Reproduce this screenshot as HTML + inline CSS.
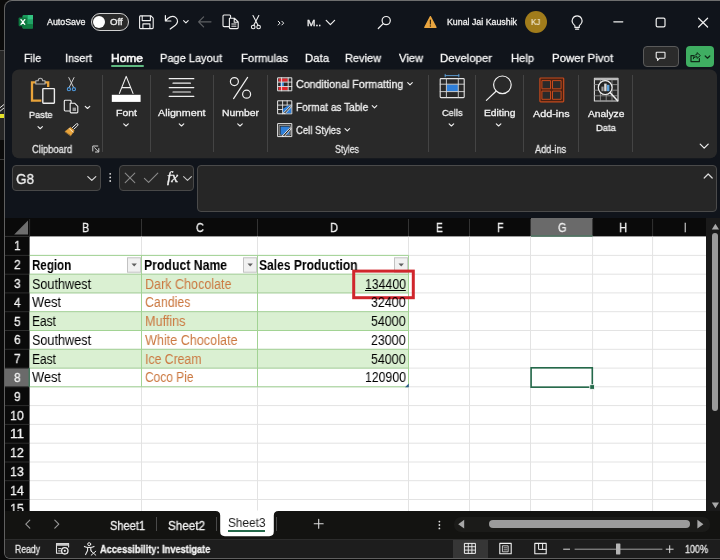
<!DOCTYPE html>
<html lang="en"><head><meta charset="utf-8"><title>Excel - Sheet3</title>
<style>
html,body{margin:0;padding:0}
body{width:720px;height:560px;overflow:hidden;background:#0a0a0a;font-family:"Liberation Sans",sans-serif}
#root{position:relative;width:720px;height:560px;overflow:hidden;background:#0a0a0a}
.t{position:absolute;white-space:pre;transform-origin:0 50%;will-change:transform}
.a{position:absolute;box-sizing:border-box}
svg{position:absolute;overflow:visible}
</style></head>
<body>
<div id="root">
<div class="a" style="left:0;top:0;width:5px;height:560px;background:#0b0b0b"></div>
<div class="a" style="left:0;top:50px;width:4px;height:90px;background:#252525;border-top:1px solid #4a4a4a"></div>
<div class="a" style="left:0;top:114px;width:4px;height:4px;background:#e6e22a"></div>
<div class="a" style="left:0;top:159px;width:4px;height:1px;background:#3a3a3a"></div>
<svg class="a" style="left:0;top:0" width="5" height="560" viewBox="0 0 5 560"><path d="M-1 108.5 L4 104.5 M-1 112 L4 108" stroke="#e8e8e8" stroke-width="1" fill="none"/></svg>
<div class="a" style="left:4px;top:0;width:730px;height:559px;border:1px solid #606060;border-top-color:#6e6e6e;border-radius:8px 0 0 6px;background:#10141b"></div>
<svg class="a" style="left:0;top:0" width="720" height="170" viewBox="0 0 720 170"><rect x="12" y="69.4" width="705" height="88.8" rx="7" fill="#292929"/></svg>
<div class="a" style="left:111px;top:65px;width:33px;height:2px;background:#5fb981;border-radius:1px"></div>
<div class="a" style="left:102px;top:75px;width:1px;height:77px;background:#444"></div>
<div class="a" style="left:150px;top:75px;width:1px;height:77px;background:#444"></div>
<div class="a" style="left:213px;top:75px;width:1px;height:77px;background:#444"></div>
<div class="a" style="left:267px;top:75px;width:1px;height:77px;background:#444"></div>
<div class="a" style="left:428px;top:75px;width:1px;height:77px;background:#444"></div>
<div class="a" style="left:475px;top:75px;width:1px;height:77px;background:#444"></div>
<div class="a" style="left:523px;top:75px;width:1px;height:77px;background:#444"></div>
<div class="a" style="left:578px;top:75px;width:1px;height:77px;background:#444"></div>
<div class="a" style="left:632px;top:75px;width:1px;height:77px;background:#444"></div>
<span class="t" style="left:46.60px;top:17.12px;font-size:8.8px;line-height:10.56px;color:#f0f0f0;transform:scaleX(1.0064);-webkit-text-stroke:0.3px #f0f0f0;">AutoSave</span>
<div class="a" style="left:90.6px;top:13.4px;width:38px;height:17.6px;border:1px solid #d0d0d0;border-radius:9px;background:#2a2a2a"></div>
<div class="a" style="left:93.4px;top:16.2px;width:12px;height:12px;border-radius:6px;background:#fff"></div>
<span class="t" style="left:110.20px;top:17.12px;font-size:8.8px;line-height:10.56px;color:#f0f0f0;transform:scaleX(1.0969);-webkit-text-stroke:0.3px #f0f0f0;">Off</span>
<span class="t" style="left:307.30px;top:16.64px;font-size:9.6px;line-height:11.52px;color:#f0f0f0;transform:scaleX(1.0504);-webkit-text-stroke:0.3px #f0f0f0;">M..</span>
<span class="t" style="left:447.00px;top:17.12px;font-size:8.8px;line-height:10.56px;color:#f0f0f0;transform:scaleX(1.0009);-webkit-text-stroke:0.3px #f0f0f0;">Kunal Jai Kaushik</span>
<div class="a" style="left:525px;top:11px;width:22px;height:22px;border-radius:11px;background:#a17c1b"></div>
<span class="t" style="left:531.40px;top:17.02px;font-size:8.8px;line-height:10.56px;color:#f3ebd6;transform:scaleX(0.9143);-webkit-text-stroke:0.3px #f3ebd6;-webkit-text-stroke:0.1px #f3ebd6;">KJ</span>
<span class="t" style="left:24.00px;top:51.60px;font-size:11.5px;line-height:13.8px;color:#f6f6f6;transform:scaleX(0.9174);-webkit-text-stroke:0.3px #f6f6f6;">File</span>
<span class="t" style="left:65.00px;top:51.60px;font-size:11.5px;line-height:13.8px;color:#f6f6f6;transform:scaleX(0.9386);-webkit-text-stroke:0.3px #f6f6f6;">Insert</span>
<span class="t" style="left:111.00px;top:51.60px;font-size:11.5px;line-height:13.8px;color:#f6f6f6;transform:scaleX(1.0428);-webkit-text-stroke:0.3px #f6f6f6;-webkit-text-stroke:0.6px #f6f6f6;">Home</span>
<span class="t" style="left:160.00px;top:51.60px;font-size:11.5px;line-height:13.8px;color:#f6f6f6;transform:scaleX(0.9598);-webkit-text-stroke:0.3px #f6f6f6;">Page Layout</span>
<span class="t" style="left:241.00px;top:51.60px;font-size:11.5px;line-height:13.8px;color:#f6f6f6;transform:scaleX(0.9804);-webkit-text-stroke:0.3px #f6f6f6;">Formulas</span>
<span class="t" style="left:305.00px;top:51.60px;font-size:11.5px;line-height:13.8px;color:#f6f6f6;transform:scaleX(0.9878);-webkit-text-stroke:0.3px #f6f6f6;">Data</span>
<span class="t" style="left:345.00px;top:51.60px;font-size:11.5px;line-height:13.8px;color:#f6f6f6;transform:scaleX(0.9544);-webkit-text-stroke:0.3px #f6f6f6;">Review</span>
<span class="t" style="left:399.00px;top:51.60px;font-size:11.5px;line-height:13.8px;color:#f6f6f6;transform:scaleX(0.9709);-webkit-text-stroke:0.3px #f6f6f6;">View</span>
<span class="t" style="left:440.00px;top:51.60px;font-size:11.5px;line-height:13.8px;color:#f6f6f6;transform:scaleX(0.9920);-webkit-text-stroke:0.3px #f6f6f6;">Developer</span>
<span class="t" style="left:511.00px;top:51.60px;font-size:11.5px;line-height:13.8px;color:#f6f6f6;transform:scaleX(0.9723);-webkit-text-stroke:0.3px #f6f6f6;">Help</span>
<span class="t" style="left:552.00px;top:51.60px;font-size:11.5px;line-height:13.8px;color:#f6f6f6;transform:scaleX(0.9941);-webkit-text-stroke:0.3px #f6f6f6;">Power Pivot</span>
<div class="a" style="left:643px;top:46px;width:36px;height:21px;border:1px solid #5a5a5a;border-radius:4px;background:#2b2b2b"></div>
<div class="a" style="left:686px;top:46px;width:28px;height:21px;border-radius:4px;background:#3fae62"></div>
<span class="t" style="left:28.70px;top:109.32px;font-size:9.8px;line-height:11.76px;color:#f2f2f2;transform:scaleX(0.9377);-webkit-text-stroke:0.3px #f2f2f2;">Paste</span>
<span class="t" style="left:31.60px;top:142.50px;font-size:10.5px;line-height:12.6px;color:#e6e6e6;transform:scaleX(0.8943);-webkit-text-stroke:0.3px #e6e6e6;">Clipboard</span>
<span class="t" style="left:116.20px;top:106.52px;font-size:9.8px;line-height:11.76px;color:#f2f2f2;transform:scaleX(1.0658);-webkit-text-stroke:0.3px #f2f2f2;">Font</span>
<span class="t" style="left:157.90px;top:106.52px;font-size:9.8px;line-height:11.76px;color:#f2f2f2;transform:scaleX(1.0923);-webkit-text-stroke:0.3px #f2f2f2;">Alignment</span>
<span class="t" style="left:221.60px;top:106.52px;font-size:9.8px;line-height:11.76px;color:#f2f2f2;transform:scaleX(1.0643);-webkit-text-stroke:0.3px #f2f2f2;">Number</span>
<span class="t" style="left:296.00px;top:78.30px;font-size:11px;line-height:13.2px;color:#f2f2f2;transform:scaleX(0.9695);-webkit-text-stroke:0.3px #f2f2f2;">Conditional Formatting</span>
<span class="t" style="left:296.00px;top:101.30px;font-size:11px;line-height:13.2px;color:#f2f2f2;transform:scaleX(0.9190);-webkit-text-stroke:0.3px #f2f2f2;">Format as Table</span>
<span class="t" style="left:296.00px;top:124.20px;font-size:11px;line-height:13.2px;color:#f2f2f2;transform:scaleX(0.8621);-webkit-text-stroke:0.3px #f2f2f2;">Cell Styles</span>
<span class="t" style="left:335.00px;top:142.70px;font-size:10.5px;line-height:12.6px;color:#e6e6e6;transform:scaleX(0.8393);-webkit-text-stroke:0.3px #e6e6e6;">Styles</span>
<span class="t" style="left:441.80px;top:106.52px;font-size:9.8px;line-height:11.76px;color:#f2f2f2;transform:scaleX(0.9412);-webkit-text-stroke:0.3px #f2f2f2;">Cells</span>
<span class="t" style="left:483.70px;top:106.52px;font-size:9.8px;line-height:11.76px;color:#f2f2f2;transform:scaleX(1.0478);-webkit-text-stroke:0.3px #f2f2f2;">Editing</span>
<span class="t" style="left:532.50px;top:107.62px;font-size:9.8px;line-height:11.76px;color:#f2f2f2;transform:scaleX(1.1048);-webkit-text-stroke:0.3px #f2f2f2;">Add-ins</span>
<span class="t" style="left:535.00px;top:142.90px;font-size:10.5px;line-height:12.6px;color:#e6e6e6;transform:scaleX(0.8762);-webkit-text-stroke:0.3px #e6e6e6;">Add-ins</span>
<span class="t" style="left:587.80px;top:107.52px;font-size:9.8px;line-height:11.76px;color:#f2f2f2;transform:scaleX(1.0442);-webkit-text-stroke:0.3px #f2f2f2;">Analyze</span>
<span class="t" style="left:596.10px;top:122.32px;font-size:9.8px;line-height:11.76px;color:#f2f2f2;transform:scaleX(0.9612);-webkit-text-stroke:0.3px #f2f2f2;">Data</span>
<div class="a" style="left:12px;top:165px;width:89px;height:26px;border:1px solid #484848;border-radius:4px;background:#262626"></div>
<span class="t" style="left:16.40px;top:169.60px;font-size:15px;line-height:18.0px;color:#f0f0f0;transform:scaleX(0.8993);-webkit-text-stroke:0.3px #f0f0f0;">G8</span>
<div class="a" style="left:119px;top:165px;width:75px;height:26px;border:1px solid #484848;border-radius:4px;background:#262626"></div>
<div class="a" style="left:197px;top:165px;width:520px;height:47px;border:1px solid #4a4a4a;border-radius:4px;background:#262626"></div>
<span class="t" style="left:166.90px;top:169.60px;font-size:14px;line-height:16.8px;color:#f0f0f0;transform:scaleX(1.1178);font-style:italic;font-family:'Liberation Serif', serif;-webkit-text-stroke:0.3px #f0f0f0;">fx</span>
<div class="a" style="left:5px;top:218px;width:715px;height:293px;background:#0a0a0a"></div>
<div class="a" style="left:706px;top:218px;width:14px;height:293px;background:#1a1a1a"></div>
<svg class="a" style="left:0;top:0" width="720" height="560" viewBox="0 0 720 560">
<rect x="29.6" y="236.4" width="676.4" height="275" fill="#fff"/>
<rect x="531" y="218" width="61.8" height="18.5" fill="#6a6a6a"/>
<rect x="5" y="368.1" width="24.6" height="18.78" fill="#6a6a6a"/>
<rect x="29.6" y="274.2" width="378.9" height="18.78" fill="#daf0d2"/>
<rect x="29.6" y="311.7" width="378.9" height="18.78" fill="#daf0d2"/>
<rect x="29.6" y="349.3" width="378.9" height="18.78" fill="#daf0d2"/>
<line x1="141.5" y1="236.6" x2="141.5" y2="511" stroke="#e3e3e3" stroke-width="1"/>
<line x1="141.5" y1="219" x2="141.5" y2="236" stroke="#333" stroke-width="1"/>
<line x1="257.5" y1="236.6" x2="257.5" y2="511" stroke="#e3e3e3" stroke-width="1"/>
<line x1="257.5" y1="219" x2="257.5" y2="236" stroke="#333" stroke-width="1"/>
<line x1="408.5" y1="236.6" x2="408.5" y2="511" stroke="#e3e3e3" stroke-width="1"/>
<line x1="408.5" y1="219" x2="408.5" y2="236" stroke="#333" stroke-width="1"/>
<line x1="469.5" y1="236.6" x2="469.5" y2="511" stroke="#e3e3e3" stroke-width="1"/>
<line x1="469.5" y1="219" x2="469.5" y2="236" stroke="#333" stroke-width="1"/>
<line x1="530.5" y1="236.6" x2="530.5" y2="511" stroke="#e3e3e3" stroke-width="1"/>
<line x1="530.5" y1="219" x2="530.5" y2="236" stroke="#333" stroke-width="1"/>
<line x1="592.6" y1="236.6" x2="592.6" y2="511" stroke="#e3e3e3" stroke-width="1"/>
<line x1="592.6" y1="219" x2="592.6" y2="236" stroke="#333" stroke-width="1"/>
<line x1="652.6" y1="236.6" x2="652.6" y2="511" stroke="#e3e3e3" stroke-width="1"/>
<line x1="652.6" y1="219" x2="652.6" y2="236" stroke="#333" stroke-width="1"/>
<line x1="29.6" y1="255.4" x2="706" y2="255.4" stroke="#e3e3e3" stroke-width="1"/>
<line x1="5" y1="255.4" x2="29.6" y2="255.4" stroke="#2e2e2e" stroke-width="1"/>
<line x1="29.6" y1="274.2" x2="706" y2="274.2" stroke="#e3e3e3" stroke-width="1"/>
<line x1="5" y1="274.2" x2="29.6" y2="274.2" stroke="#2e2e2e" stroke-width="1"/>
<line x1="29.6" y1="292.9" x2="706" y2="292.9" stroke="#e3e3e3" stroke-width="1"/>
<line x1="5" y1="292.9" x2="29.6" y2="292.9" stroke="#2e2e2e" stroke-width="1"/>
<line x1="29.6" y1="311.7" x2="706" y2="311.7" stroke="#e3e3e3" stroke-width="1"/>
<line x1="5" y1="311.7" x2="29.6" y2="311.7" stroke="#2e2e2e" stroke-width="1"/>
<line x1="29.6" y1="330.5" x2="706" y2="330.5" stroke="#e3e3e3" stroke-width="1"/>
<line x1="5" y1="330.5" x2="29.6" y2="330.5" stroke="#2e2e2e" stroke-width="1"/>
<line x1="29.6" y1="349.3" x2="706" y2="349.3" stroke="#e3e3e3" stroke-width="1"/>
<line x1="5" y1="349.3" x2="29.6" y2="349.3" stroke="#2e2e2e" stroke-width="1"/>
<line x1="29.6" y1="368.1" x2="706" y2="368.1" stroke="#e3e3e3" stroke-width="1"/>
<line x1="5" y1="368.1" x2="29.6" y2="368.1" stroke="#2e2e2e" stroke-width="1"/>
<line x1="29.6" y1="386.8" x2="706" y2="386.8" stroke="#e3e3e3" stroke-width="1"/>
<line x1="5" y1="386.8" x2="29.6" y2="386.8" stroke="#2e2e2e" stroke-width="1"/>
<line x1="29.6" y1="405.6" x2="706" y2="405.6" stroke="#e3e3e3" stroke-width="1"/>
<line x1="5" y1="405.6" x2="29.6" y2="405.6" stroke="#2e2e2e" stroke-width="1"/>
<line x1="29.6" y1="424.4" x2="706" y2="424.4" stroke="#e3e3e3" stroke-width="1"/>
<line x1="5" y1="424.4" x2="29.6" y2="424.4" stroke="#2e2e2e" stroke-width="1"/>
<line x1="29.6" y1="443.2" x2="706" y2="443.2" stroke="#e3e3e3" stroke-width="1"/>
<line x1="5" y1="443.2" x2="29.6" y2="443.2" stroke="#2e2e2e" stroke-width="1"/>
<line x1="29.6" y1="462.0" x2="706" y2="462.0" stroke="#e3e3e3" stroke-width="1"/>
<line x1="5" y1="462.0" x2="29.6" y2="462.0" stroke="#2e2e2e" stroke-width="1"/>
<line x1="29.6" y1="480.7" x2="706" y2="480.7" stroke="#e3e3e3" stroke-width="1"/>
<line x1="5" y1="480.7" x2="29.6" y2="480.7" stroke="#2e2e2e" stroke-width="1"/>
<line x1="29.6" y1="499.5" x2="706" y2="499.5" stroke="#e3e3e3" stroke-width="1"/>
<line x1="5" y1="499.5" x2="29.6" y2="499.5" stroke="#2e2e2e" stroke-width="1"/>
<line x1="29.6" y1="255.4" x2="408.5" y2="255.4" stroke="#a2d394" stroke-width="1"/>
<line x1="29.6" y1="274.2" x2="408.5" y2="274.2" stroke="#a2d394" stroke-width="1"/>
<line x1="29.6" y1="292.9" x2="408.5" y2="292.9" stroke="#a2d394" stroke-width="1"/>
<line x1="29.6" y1="311.7" x2="408.5" y2="311.7" stroke="#a2d394" stroke-width="1"/>
<line x1="29.6" y1="330.5" x2="408.5" y2="330.5" stroke="#a2d394" stroke-width="1"/>
<line x1="29.6" y1="349.3" x2="408.5" y2="349.3" stroke="#a2d394" stroke-width="1"/>
<line x1="29.6" y1="368.1" x2="408.5" y2="368.1" stroke="#a2d394" stroke-width="1"/>
<line x1="29.6" y1="386.8" x2="408.5" y2="386.8" stroke="#a2d394" stroke-width="1"/>
<line x1="141.5" y1="255.4" x2="141.5" y2="386.8" stroke="#a2d394" stroke-width="1"/>
<line x1="257.5" y1="255.4" x2="257.5" y2="386.8" stroke="#a2d394" stroke-width="1"/>
<line x1="408.5" y1="255.4" x2="408.5" y2="386.8" stroke="#a2d394" stroke-width="1"/>
<path d="M28 220.6 V234.6 H14.2 Z" fill="#6e6e6e"/>
<line x1="29.6" y1="219" x2="29.6" y2="236" stroke="#2c2c2c" stroke-width="1"/>
<line x1="5" y1="236.4" x2="29.6" y2="236.4" stroke="#333" stroke-width="1"/>
<rect x="127.5" y="257.8" width="13.2" height="14.4" fill="#f1f1f1" stroke="#c2c2c2" stroke-width="1"/>
<path d="M131.5 263.4 h5.4 l-2.7 3 z" fill="#606060"/>
<rect x="243.5" y="257.8" width="13.2" height="14.4" fill="#f1f1f1" stroke="#c2c2c2" stroke-width="1"/>
<path d="M247.5 263.4 h5.4 l-2.7 3 z" fill="#606060"/>
<rect x="394.5" y="257.8" width="13.2" height="14.4" fill="#f1f1f1" stroke="#c2c2c2" stroke-width="1"/>
<path d="M398.5 263.4 h5.4 l-2.7 3 z" fill="#606060"/>
<rect x="353.7" y="271.1" width="59.6" height="26.6" fill="none" stroke="#d0262c" stroke-width="3"/>
<rect x="531.1" y="367.8" width="61.2" height="19.38" fill="none" stroke="#24694a" stroke-width="1.6"/>
<rect x="589.8" y="384.7" width="4.6" height="4.6" fill="#24694a" stroke="#fff" stroke-width="0.8"/>
<line x1="531" y1="236" x2="592.8" y2="236" stroke="#3f7a5c" stroke-width="1.2"/>
<line x1="29.2" y1="368.1" x2="29.2" y2="386.8" stroke="#3f7a5c" stroke-width="1.2"/>
<path d="M408.8 383.4 v3.8 h-3.8 z" fill="#2f5d8a"/>
</svg>
<span class="t" style="left:82.40px;top:219.80px;font-size:13px;line-height:15.6px;color:#f0f0f0;transform:scaleX(0.8303);-webkit-text-stroke:0.3px #f0f0f0;">B</span>
<span class="t" style="left:196.40px;top:219.80px;font-size:13px;line-height:15.6px;color:#f0f0f0;transform:scaleX(0.8306);-webkit-text-stroke:0.3px #f0f0f0;">C</span>
<span class="t" style="left:329.60px;top:219.80px;font-size:13px;line-height:15.6px;color:#f0f0f0;transform:scaleX(0.8519);-webkit-text-stroke:0.3px #f0f0f0;">D</span>
<span class="t" style="left:436.20px;top:219.80px;font-size:13px;line-height:15.6px;color:#f0f0f0;transform:scaleX(0.7841);-webkit-text-stroke:0.3px #f0f0f0;">E</span>
<span class="t" style="left:497.40px;top:219.80px;font-size:13px;line-height:15.6px;color:#f0f0f0;transform:scaleX(0.8047);-webkit-text-stroke:0.3px #f0f0f0;">F</span>
<span class="t" style="left:557.80px;top:219.80px;font-size:13px;line-height:15.6px;color:#f0f0f0;transform:scaleX(0.8296);-webkit-text-stroke:0.3px #f0f0f0;">G</span>
<span class="t" style="left:618.60px;top:219.80px;font-size:13px;line-height:15.6px;color:#f0f0f0;transform:scaleX(0.8519);-webkit-text-stroke:0.3px #f0f0f0;">H</span>
<span class="t" style="left:684.20px;top:219.80px;font-size:13px;line-height:15.6px;color:#f0f0f0;transform:scaleX(0.6069);-webkit-text-stroke:0.3px #f0f0f0;">I</span>
<span class="t" style="left:13.60px;top:238.49px;font-size:13.5px;line-height:16.2px;color:#f4f4f4;transform:scaleX(0.8915);-webkit-text-stroke:0.3px #f4f4f4;">1</span>
<span class="t" style="left:13.60px;top:257.27px;font-size:13.5px;line-height:16.2px;color:#f4f4f4;transform:scaleX(0.8915);-webkit-text-stroke:0.3px #f4f4f4;">2</span>
<span class="t" style="left:13.60px;top:276.05px;font-size:13.5px;line-height:16.2px;color:#f4f4f4;transform:scaleX(0.8915);-webkit-text-stroke:0.3px #f4f4f4;">3</span>
<span class="t" style="left:13.60px;top:294.83px;font-size:13.5px;line-height:16.2px;color:#f4f4f4;transform:scaleX(0.8915);-webkit-text-stroke:0.3px #f4f4f4;">4</span>
<span class="t" style="left:13.60px;top:313.61px;font-size:13.5px;line-height:16.2px;color:#f4f4f4;transform:scaleX(0.8915);-webkit-text-stroke:0.3px #f4f4f4;">5</span>
<span class="t" style="left:13.60px;top:332.39px;font-size:13.5px;line-height:16.2px;color:#f4f4f4;transform:scaleX(0.8915);-webkit-text-stroke:0.3px #f4f4f4;">6</span>
<span class="t" style="left:13.60px;top:351.17px;font-size:13.5px;line-height:16.2px;color:#f4f4f4;transform:scaleX(0.8915);-webkit-text-stroke:0.3px #f4f4f4;">7</span>
<span class="t" style="left:13.60px;top:369.95px;font-size:13.5px;line-height:16.2px;color:#f4f4f4;transform:scaleX(0.8915);-webkit-text-stroke:0.3px #f4f4f4;">8</span>
<span class="t" style="left:13.60px;top:388.73px;font-size:13.5px;line-height:16.2px;color:#f4f4f4;transform:scaleX(0.8915);-webkit-text-stroke:0.3px #f4f4f4;">9</span>
<span class="t" style="left:10.40px;top:407.51px;font-size:13.5px;line-height:16.2px;color:#f4f4f4;transform:scaleX(0.9181);-webkit-text-stroke:0.3px #f4f4f4;">10</span>
<span class="t" style="left:10.40px;top:426.29px;font-size:13.5px;line-height:16.2px;color:#f4f4f4;transform:scaleX(0.9846);-webkit-text-stroke:0.3px #f4f4f4;">11</span>
<span class="t" style="left:10.40px;top:445.07px;font-size:13.5px;line-height:16.2px;color:#f4f4f4;transform:scaleX(0.9181);-webkit-text-stroke:0.3px #f4f4f4;">12</span>
<span class="t" style="left:10.40px;top:463.85px;font-size:13.5px;line-height:16.2px;color:#f4f4f4;transform:scaleX(0.9181);-webkit-text-stroke:0.3px #f4f4f4;">13</span>
<span class="t" style="left:10.40px;top:482.63px;font-size:13.5px;line-height:16.2px;color:#f4f4f4;transform:scaleX(0.9181);-webkit-text-stroke:0.3px #f4f4f4;">14</span>
<span class="t" style="left:10.40px;top:501.41px;font-size:13.5px;line-height:16.2px;color:#f4f4f4;transform:scaleX(0.9181);-webkit-text-stroke:0.3px #f4f4f4;">15</span>
<span class="t" style="left:31.80px;top:256.77px;font-size:14px;line-height:16.8px;color:#000;transform:scaleX(0.8261);font-weight:700;">Region</span>
<span class="t" style="left:143.90px;top:256.77px;font-size:14px;line-height:16.8px;color:#000;transform:scaleX(0.8755);font-weight:700;">Product Name</span>
<span class="t" style="left:259.40px;top:256.77px;font-size:14px;line-height:16.8px;color:#000;transform:scaleX(0.8622);font-weight:700;">Sales Production</span>
<span class="t" style="left:32.00px;top:275.55px;font-size:14px;line-height:16.8px;color:#000;transform:scaleX(0.9025);">Southwest</span>
<span class="t" style="left:144.50px;top:275.55px;font-size:14px;line-height:16.8px;color:#cb7840;transform:scaleX(0.8964);">Dark Chocolate</span>
<span class="t" style="left:365.00px;top:275.55px;font-size:14px;line-height:16.8px;color:#000;transform:scaleX(0.8776);text-decoration:underline;">134400</span>
<span class="t" style="left:32.00px;top:294.33px;font-size:14px;line-height:16.8px;color:#000;transform:scaleX(0.9165);">West</span>
<span class="t" style="left:144.50px;top:294.33px;font-size:14px;line-height:16.8px;color:#cb7840;transform:scaleX(0.8856);">Candies</span>
<span class="t" style="left:371.40px;top:294.33px;font-size:14px;line-height:16.8px;color:#000;transform:scaleX(0.8886);">32400</span>
<span class="t" style="left:32.00px;top:313.11px;font-size:14px;line-height:16.8px;color:#000;transform:scaleX(0.8567);">East</span>
<span class="t" style="left:144.50px;top:313.11px;font-size:14px;line-height:16.8px;color:#cb7840;transform:scaleX(0.9025);">Muffins</span>
<span class="t" style="left:371.40px;top:313.11px;font-size:14px;line-height:16.8px;color:#000;transform:scaleX(0.8886);">54000</span>
<span class="t" style="left:32.00px;top:331.89px;font-size:14px;line-height:16.8px;color:#000;transform:scaleX(0.9025);">Southwest</span>
<span class="t" style="left:144.50px;top:331.89px;font-size:14px;line-height:16.8px;color:#cb7840;transform:scaleX(0.9005);">White Chocolate</span>
<span class="t" style="left:371.40px;top:331.89px;font-size:14px;line-height:16.8px;color:#000;transform:scaleX(0.8886);">23000</span>
<span class="t" style="left:32.00px;top:350.67px;font-size:14px;line-height:16.8px;color:#000;transform:scaleX(0.8567);">East</span>
<span class="t" style="left:144.50px;top:350.67px;font-size:14px;line-height:16.8px;color:#cb7840;transform:scaleX(0.8749);">Ice Cream</span>
<span class="t" style="left:371.40px;top:350.67px;font-size:14px;line-height:16.8px;color:#000;transform:scaleX(0.8886);">54000</span>
<span class="t" style="left:32.00px;top:369.45px;font-size:14px;line-height:16.8px;color:#000;transform:scaleX(0.9165);">West</span>
<span class="t" style="left:144.50px;top:369.45px;font-size:14px;line-height:16.8px;color:#cb7840;transform:scaleX(0.8537);">Coco Pie</span>
<span class="t" style="left:365.00px;top:369.45px;font-size:14px;line-height:16.8px;color:#000;transform:scaleX(0.8776);">120900</span>
<div class="a" style="left:5px;top:511px;width:715px;height:28px;background:#131311"></div>
<div class="a" style="left:5px;top:539px;width:715px;height:19px;background:#1d1d1d;border-top:1px solid #2c2c2c;border-radius:0 0 0 5px"></div>
<svg class="a" style="left:0;top:0" width="720" height="560" viewBox="0 0 720 560"><path d="M215.5 510.5 H278.5 V511 Q273.8 511 273.8 515.5 V531.6 Q273.8 536.2 269.2 536.2 H224.8 Q220.2 536.2 220.2 531.6 V515.5 Q220.2 511 215.5 511 Z" fill="#fff"/></svg>
<div class="a" style="left:228px;top:530px;width:37px;height:2px;background:#24694a"></div>
<div class="a" style="left:156px;top:517px;width:1px;height:14px;background:#4a4a4a"></div>
<div class="a" style="left:216px;top:517px;width:1px;height:14px;background:#4a4a4a"></div>
<div class="a" style="left:276px;top:517px;width:1px;height:14px;background:#4a4a4a"></div>
<span class="t" style="left:110.00px;top:518.50px;font-size:12.5px;line-height:15.0px;color:#f0f0f0;transform:scaleX(0.8833);-webkit-text-stroke:0.3px #f0f0f0;">Sheet1</span>
<span class="t" style="left:168.00px;top:518.50px;font-size:12.5px;line-height:15.0px;color:#f0f0f0;transform:scaleX(0.9338);-webkit-text-stroke:0.3px #f0f0f0;">Sheet2</span>
<span class="t" style="left:227.80px;top:515.70px;font-size:12.5px;line-height:15.0px;color:#1c1c1c;transform:scaleX(0.9464);">Sheet3</span>
<span class="t" style="left:15.00px;top:543.60px;font-size:10px;line-height:12.0px;color:#e6e6e6;transform:scaleX(0.8649);-webkit-text-stroke:0.3px #e6e6e6;">Ready</span>
<span class="t" style="left:99.70px;top:543.60px;font-size:10px;line-height:12.0px;color:#f2f2f2;transform:scaleX(0.9230);font-weight:700;-webkit-text-stroke:0.3px #f2f2f2;">Accessibility: Investigate</span>
<span class="t" style="left:685.00px;top:543.60px;font-size:10px;line-height:12.0px;color:#e6e6e6;transform:scaleX(0.8992);-webkit-text-stroke:0.3px #e6e6e6;">100%</span>
<div class="a" style="left:453px;top:540px;width:35px;height:18px;background:#363636"></div>
<div class="a" style="left:454px;top:517px;width:256px;height:15px;border-radius:7px;background:#1b1b19"></div>
<div class="a" style="left:489px;top:520px;width:201px;height:8px;border-radius:4px;background:#9b9b9b"></div>
<div class="a" style="left:711.5px;top:233px;width:6.5px;height:178px;border-radius:3.5px;background:#9b9b9b"></div>
<svg class="a" style="left:0;top:0" width="720" height="560" viewBox="0 0 720 560" fill="none" stroke-linecap="round" stroke-linejoin="round">
<rect x="22.5" y="15" width="10.5" height="13.6" rx="1.2" fill="#1a9b5c" stroke="none"/>
<rect x="27.8" y="15" width="5.2" height="4.6" fill="#33c481" stroke="none"/>
<rect x="27.8" y="19.6" width="5.2" height="4.5" fill="#21a366" stroke="none"/>
<rect x="22.5" y="24.1" width="10.5" height="4.5" rx="1" fill="#107c41" stroke="none"/>
<rect x="18.6" y="17.6" width="8.6" height="8.6" rx="1" fill="#0f7a40" stroke="none"/>
<path d="M21 19.6 L24.8 24.3 M24.8 19.6 L21 24.3" stroke="#fff" stroke-width="1.3"/>
<path d="M140.3 15.9 H151 L153.2 18.1 V27.6 Q153.2 28.6 152.2 28.6 H140.3 Q139.6 28.6 139.6 27.6 V16.9 Q139.6 15.9 140.3 15.9 Z" stroke="#f0f0f0" stroke-width="1.1"/>
<path d="M142.2 16 V20.6 H150.4 V16 M142.9 28.4 V23.9 H149.9 V28.4" stroke="#f0f0f0" stroke-width="1.1"/>
<path d="M165.4 15.6 V21 H170.9 M165.6 20.8 C168 17.2 172.5 15 175.6 17.4 C178.8 20 177.8 23.4 175 25.6 L170.2 29" stroke="#f0f0f0" stroke-width="1.2"/>
<path d="M183.6 20.6 L185.9 22.9 L188.2 20.6" stroke="#f0f0f0" stroke-width="1.1"/>
<path d="M211 21.8 H198.6 M203.6 16.8 L198.6 21.8 L203.6 26.8" stroke="#5e6064" stroke-width="1.2"/>
<path d="M229 26.6 H224 Q223 26.6 223 25.6 V16 Q223 15 224 15 H229.6 Q230.6 15 230.6 16 V17.6" stroke="#f0f0f0" stroke-width="1.1"/>
<path d="M229.4 18.2 H234.4 L238.2 22 V27.6 Q238.2 28.6 237.2 28.6 H230.4 Q229.4 28.6 229.4 27.6 Z M234.2 18.4 V22.2 H238" stroke="#f0f0f0" stroke-width="1.1"/>
<path d="M231.8 24 H236 M231.8 26.2 H236" stroke="#f0f0f0" stroke-width="1"/>
<path d="M253 15.6 L258 25.2 M258.8 15.6 L253.8 25.2" stroke="#f0f0f0" stroke-width="1.1"/>
<circle cx="253.2" cy="27" r="1.8" stroke="#f0f0f0" stroke-width="1.1"/><circle cx="258.6" cy="27" r="1.8" stroke="#f0f0f0" stroke-width="1.1"/>
<path d="M278.2 21.2 L280.1 23.1 L278.2 25 M281.8 21.2 L283.7 23.1 L281.8 25" stroke="#f0f0f0" stroke-width="1"/>
<path d="M326.2 20.4 L330.4 24.6 L334.6 20.4" stroke="#f0f0f0" stroke-width="1.2"/>
<circle cx="386.2" cy="20.6" r="4.1" stroke="#f0f0f0" stroke-width="1.2"/><path d="M383.2 23.6 L378.3 28.5" stroke="#f0f0f0" stroke-width="1.2"/>
<path d="M430.4 16.6 L436 27.4 H424.8 Z" fill="#eaa640" stroke="#eaa640" stroke-width="1.2"/>
<path d="M430.4 20 V24" stroke="#3a2a10" stroke-width="1.2"/><circle cx="430.4" cy="25.9" r="0.75" fill="#3a2a10" stroke="none"/>
<path d="M574.9 25.6 C572.6 23.8 571.6 21.2 572.6 18.8 C573.6 16.6 575.4 15.9 577.1 15.9 C578.8 15.9 580.6 16.6 581.6 18.8 C582.6 21.2 581.6 23.8 579.3 25.6 V27.4 H574.9 Z" stroke="#f0f0f0" stroke-width="1.1"/>
<path d="M575.6 29.2 H578.6" stroke="#f0f0f0" stroke-width="1.2"/>
<path d="M613.8 21.8 H622.8" stroke="#f0f0f0" stroke-width="1.2"/>
<rect x="656.2" y="18.2" width="8.8" height="8.6" rx="1.4" stroke="#f0f0f0" stroke-width="1.2"/>
<path d="M698.6 18.2 L707.6 27 M707.6 18.2 L698.6 27" stroke="#f0f0f0" stroke-width="1.2"/>
<path d="M656.8 52.2 H664.4 Q665 52.2 665 52.8 V57.6 Q665 58.2 664.4 58.2 H659.6 L657.6 60.4 V58.2 H656.8 Q656.2 58.2 656.2 57.6 V52.8 Q656.2 52.2 656.8 52.2 Z" stroke="#f0f0f0" stroke-width="1.1"/>
<path d="M693.6 55.6 H691 V61.6 H699.4 V58.6" stroke="#0f2a18" stroke-width="1.2"/>
<path d="M693.4 58.6 C693.6 56 695 54.6 697 54.6 V52.6 L700.4 55.6 L697 58.4 V56.6 C695.6 56.6 694.4 57.2 693.4 58.6 Z" stroke="#0f2a18" stroke-width="1"/>
<path d="M705.2 56 L707.5 58.2 L709.8 56" stroke="#0f2a18" stroke-width="1.2"/>
<path d="M36 82.3 H32 V100.6 H41.4 M44.6 82.3 H48.2 V87" stroke="#e8a33a" stroke-width="2.3" stroke-linejoin="miter" stroke-linecap="butt"/>
<path d="M35.8 84 V80.8 H38.2 C38.2 77.4 42.6 77.4 42.6 80.8 H45 V84 Z" fill="#292929" stroke="#b4b4b4" stroke-width="1.1"/>
<rect x="42.8" y="88.6" width="11.6" height="14.6" rx="0.6" fill="#2b2b2b" stroke="#ececec" stroke-width="1.4"/>
<path d="M38.0 126.65 L40.2 128.75 L42.400000000000006 126.65" stroke="#f0f0f0" stroke-width="1.1"/>
<path d="M68.8 77.6 L73.4 87 M74 77.6 L69.4 87" stroke="#d0d0d0" stroke-width="1"/>
<circle cx="68.9" cy="89.2" r="1.6" stroke="#4f9be0" stroke-width="1.1"/><circle cx="73.9" cy="89.2" r="1.6" stroke="#4f9be0" stroke-width="1.1"/>
<path d="M69.6 111 H65.2 Q64.3 111 64.3 110.1 V101.2 Q64.3 100.3 65.2 100.3 H70.2 Q71.1 100.3 71.1 101.2 V102.4" stroke="#f0f0f0" stroke-width="1.1"/>
<path d="M70.2 103.2 H74.6 L77.8 106.4 V112 Q77.8 112.9 76.9 112.9 H71.1 Q70.2 112.9 70.2 112 Z" stroke="#f0f0f0" stroke-width="1.1"/>
<rect x="72.6" y="107.6" width="3.4" height="3.4" fill="#9a9a9a" stroke="none"/>
<path d="M85.2 106.30000000000001 L87.5 108.5 L89.8 106.30000000000001" stroke="#f0f0f0" stroke-width="1.1"/>
<path d="M72.4 127.6 L76.4 123.9 Q77.4 123.2 77.9 124.1 Q78.3 125 77.5 125.8 L73.8 129.2" stroke="#f0f0f0" stroke-width="1"/>
<path d="M65.2 131.4 L70.6 127.2 L74.2 130.8 L70.8 135.6 Z" fill="#e8a33a" stroke="#e8a33a" stroke-width="0.6"/>
<path d="M69.4 128.6 L73 132.2" stroke="#fff" stroke-width="0.8"/>
<path d="M92.8 151 V146 H97.8 M94.6 147.8 L98.6 151.8 M98.8 148.6 V152 H95.4" stroke="#d0d0d0" stroke-width="1"/>
<path d="M119.4 93.4 L126.2 76.4 L133 93.4 M121.8 87.6 H130.6" stroke="#f0f0f0" stroke-width="1.1"/>
<rect x="111.8" y="94.8" width="28.8" height="7.1" fill="#fff" stroke="none"/>
<path d="M123.7 123.80000000000001 L126 126.0 L128.3 123.80000000000001" stroke="#f0f0f0" stroke-width="1.1"/>
<path d="M169.2 78.7 H193.8" stroke="#f0f0f0" stroke-width="1.2"/>
<path d="M173 83.2 H190.4" stroke="#f0f0f0" stroke-width="1.2"/>
<path d="M169.2 87.6 H193.8" stroke="#f0f0f0" stroke-width="1.2"/>
<path d="M173 92 H190.4" stroke="#f0f0f0" stroke-width="1.2"/>
<path d="M169.2 96.4 H193.8" stroke="#f0f0f0" stroke-width="1.2"/>
<path d="M179.2 123.80000000000001 L181.5 126.0 L183.8 123.80000000000001" stroke="#f0f0f0" stroke-width="1.1"/>
<circle cx="234.4" cy="81.6" r="4" stroke="#f0f0f0" stroke-width="1.2"/><circle cx="246.6" cy="94.2" r="4" stroke="#f0f0f0" stroke-width="1.2"/><path d="M247.6 77.4 L233.6 98.6" stroke="#f0f0f0" stroke-width="1.2"/>
<path d="M237.7 123.80000000000001 L240 126.0 L242.3 123.80000000000001" stroke="#f0f0f0" stroke-width="1.1"/>
<rect x="278.6" y="78.39999999999999" width="9.2" height="3.4" fill="#e0262c" stroke="none"/>
<rect x="278.6" y="86.6" width="9.2" height="3.6" fill="#e0262c" stroke="none"/>
<rect x="280.4" y="82.2" width="3.4" height="4.2" fill="#3b8de0" stroke="none"/>
<rect x="278" y="77.8" width="13.8" height="13" stroke="#e4e4e4" stroke-width="1"/>
<path d="M278 82.1 H291.8 M278 86.5 H291.8 M281.6 77.8 V90.8 M288.2 77.8 V90.8" stroke="#e4e4e4" stroke-width="0.9"/>
<path d="M407.7 82.7 L410 84.89999999999999 L412.3 82.7" stroke="#f0f0f0" stroke-width="1.1"/>
<rect x="278" y="100.8" width="13.8" height="13" stroke="#e4e4e4" stroke-width="1"/>
<path d="M278 105.1 H291.8 M278 109.5 H283 M282.6 100.8 V113.8 M287.2 100.8 V105.1" stroke="#e4e4e4" stroke-width="0.9"/>
<path d="M283 113.2 L283 108.8 L288 105.6 H291.2 V113.2 Z" fill="#2f7fd8" stroke="none"/>
<path d="M283.4 113.0 L290.2 106.0 Q291.6 105.2 291.4 106.8 L285.4 113.39999999999999 Z" fill="#292929" stroke="#f0f0f0" stroke-width="0.9"/>
<path d="M372.2 105.7 L374.5 107.89999999999999 L376.8 105.7" stroke="#f0f0f0" stroke-width="1.1"/>
<rect x="278" y="123.6" width="13.8" height="13" stroke="#e4e4e4" stroke-width="1"/>
<path d="M279.6 125.39999999999999 H290.2 V135.0 H279.6 Z" stroke="#bdbdbd" stroke-width="0.7"/>
<path d="M280.6 134.6 L280.6 126.6 H289.4 V134.6 Z" fill="#2f7fd8" stroke="none"/>
<path d="M282.4 135.79999999999998 L289.6 128.2 Q291.2 127.19999999999999 291 129.0 L284.6 136.2 Z" fill="#292929" stroke="#f0f0f0" stroke-width="0.9"/>
<path d="M345.0 128.70000000000002 L347.3 130.9 L349.6 128.70000000000002" stroke="#f0f0f0" stroke-width="1.1"/>
<path d="M445.2 75.6 H458.8 M445.2 74.3 V76.9 M458.8 74.3 V76.9" stroke="#5fa3dc" stroke-width="0.9"/>
<rect x="446.6" y="84.4" width="11.4" height="7.2" fill="#2f7fd8" stroke="none"/>
<rect x="440.2" y="78.6" width="24" height="19" rx="0.8" stroke="#e4e4e4" stroke-width="1.1"/>
<path d="M440.2 84.2 H464.2 M440.2 91.6 H464.2 M446.4 78.6 V97.6 M458.3 78.6 V97.6" stroke="#d8d8d8" stroke-width="0.9"/>
<path d="M449.09999999999997 123.80000000000001 L451.4 126.0 L453.7 123.80000000000001" stroke="#f0f0f0" stroke-width="1.1"/>
<circle cx="502.4" cy="84.8" r="8.8" stroke="#f0f0f0" stroke-width="1.2"/><path d="M496 91.2 L486.4 100.4" stroke="#f0f0f0" stroke-width="1.2"/>
<path d="M496.3 123.80000000000001 L498.6 126.0 L500.90000000000003 123.80000000000001" stroke="#f0f0f0" stroke-width="1.1"/>
<rect x="539.9" y="78" width="23.8" height="23.8" rx="0.8" fill="#4a2011" stroke="#c54a1d" stroke-width="1.2"/>
<rect x="542.3" y="80.6" width="8.2" height="8.2" fill="#2a2a2a" stroke="#c54a1d" stroke-width="1"/>
<rect x="552.9" y="80.6" width="8.2" height="8.2" fill="#2a2a2a" stroke="#c54a1d" stroke-width="1"/>
<rect x="542.3" y="91.1" width="8.2" height="8.2" fill="#2a2a2a" stroke="#c54a1d" stroke-width="1"/>
<rect x="552.9" y="91.1" width="8.2" height="8.2" fill="#2a2a2a" stroke="#c54a1d" stroke-width="1"/>
<rect x="594.4" y="78.2" width="23.6" height="22.8" fill="none" stroke="#dcdcdc" stroke-width="1.1"/>
<rect x="594.4" y="78.2" width="23.6" height="2" fill="#bcbcbc" stroke="none"/>
<path d="M594.4 84.6 H618 M594.4 90.2 H618 M594.4 95.8 H618 M600.4 80 V101 M606.2 80 V101 M612 80 V101" stroke="#9a9a9a" stroke-width="0.8"/>
<circle cx="605.2" cy="87.6" r="6.9" fill="#242424" stroke="#f0f0f0" stroke-width="1.2"/>
<path d="M610.2 92.8 L617.6 100.8" stroke="#f0f0f0" stroke-width="1.5"/>
<rect x="601.4" y="86.6" width="2.2" height="4.6" fill="#9a9a9a" stroke="none"/><rect x="604.2" y="83.6" width="2.4" height="7.6" fill="#dcdcdc" stroke="none"/><rect x="607" y="84.8" width="2.4" height="6.4" fill="#5fa3dc" stroke="none"/>
<path d="M700.2 144.2 L704.2 148.2 L708.2 144.2" stroke="#f0f0f0" stroke-width="1.2"/>
<path d="M87.8 176.6 L91.8 180.4 L95.8 176.6" stroke="#dcdcdc" stroke-width="1.2"/>
<circle cx="110.2" cy="173.8" r="0.9" fill="#dcdcdc" stroke="none"/>
<circle cx="110.2" cy="177.4" r="0.9" fill="#dcdcdc" stroke="none"/>
<circle cx="110.2" cy="181" r="0.9" fill="#dcdcdc" stroke="none"/>
<path d="M125.2 173.2 L134.8 182.6 M134.8 173.2 L125.2 182.6" stroke="#8a8a8a" stroke-width="1.1"/>
<path d="M144.4 178.4 L148.6 182.4 L157.8 173.2" stroke="#8a8a8a" stroke-width="1.1"/>
<path d="M183.6 176.6 L187.5 180.4 L191.4 176.6" stroke="#c8c8c8" stroke-width="1.1"/>
<path d="M704.2 178 L708.2 174 L712.2 178" stroke="#dcdcdc" stroke-width="1.2"/>
<path d="M715.4 223.8 L719 229.4 H711.8 Z" fill="#a8a8a8" stroke="none"/>
<path d="M715.4 508.2 L719 502.6 H711.8 Z" fill="#a8a8a8" stroke="none"/>
<path d="M458.2 524.2 L464.2 519.8 V528.6 Z" fill="#a8a8a8" stroke="none"/>
<path d="M703.4 524.2 L697.4 519.8 V528.6 Z" fill="#a8a8a8" stroke="none"/>
<circle cx="439.4" cy="521.6" r="0.9" fill="#dcdcdc" stroke="none"/>
<circle cx="439.4" cy="525" r="0.9" fill="#dcdcdc" stroke="none"/>
<circle cx="439.4" cy="528.4" r="0.9" fill="#dcdcdc" stroke="none"/>
<path d="M29.8 520.2 L25.8 524.2 L29.8 528.2" stroke="#9a9a9a" stroke-width="1.1"/>
<path d="M54.8 520.2 L58.8 524.2 L54.8 528.2" stroke="#9a9a9a" stroke-width="1.1"/>
<path d="M314.2 523.8 H323.2 M318.7 519.3 V528.3" stroke="#dcdcdc" stroke-width="1.1"/>
<path d="M56.5 543.6 H68.6 V547 M56.5 543.6 V553.2 H61.6" stroke="#e4e4e4" stroke-width="1.1"/>
<rect x="56.5" y="543.4" width="12.1" height="2.4" fill="#c8c8c8" stroke="none"/>
<path d="M58.6 548.6 H61 M58.6 550.9 H60.4" stroke="#e4e4e4" stroke-width="1"/>
<circle cx="64.8" cy="550.8" r="3.2" fill="#1d1d1d" stroke="#ececec" stroke-width="1.3"/><circle cx="64.8" cy="550.8" r="1.1" fill="#ececec" stroke="none"/>
<circle cx="89.2" cy="544.2" r="1.5" stroke="#ececec" stroke-width="1"/>
<path d="M84.4 546.4 Q86.6 547.6 89.2 547.4 Q91.8 547.6 94 546.4 M87.6 547.6 V550.4 L85.6 554.6 M90.8 547.6 V550.2 L91.6 551.4" stroke="#ececec" stroke-width="1.1"/>
<path d="M91.2 551.2 L95.8 555.2 M95.8 551.2 L91.2 555.2" stroke="#ececec" stroke-width="1"/>
<rect x="464.8" y="543.4" width="10.6" height="10" stroke="#f0f0f0" stroke-width="1"/><path d="M464.8 546.7 H475.4 M464.8 550.1 H475.4 M468.3 543.4 V553.4 M471.9 543.4 V553.4" stroke="#f0f0f0" stroke-width="0.9"/>
<rect x="499.8" y="543.4" width="11.4" height="10.4" stroke="#f0f0f0" stroke-width="1.1"/><rect x="502.8" y="545.8" width="5.4" height="6" stroke="#f0f0f0" stroke-width="0.8"/><path d="M504 547.8 H507 M504 549.8 H507" stroke="#f0f0f0" stroke-width="0.7"/>
<rect x="534.8" y="543.4" width="11.4" height="10.4" stroke="#f0f0f0" stroke-width="1.1"/><path d="M538.6 543.4 V549.4 H546.2 M542.6 543.4 V549.4" stroke="#f0f0f0" stroke-width="1"/>
<path d="M563.6 549.2 H569.6" stroke="#dcdcdc" stroke-width="1"/>
<path d="M575 549.2 H662" stroke="#b0b0b0" stroke-width="0.9"/>
<rect x="616" y="543.4" width="4.4" height="11" rx="0.6" fill="#b4b4b4" stroke="none"/>
<path d="M666.2 549.2 H673.2 M669.7 545.7 V552.7" stroke="#dcdcdc" stroke-width="1"/>
</svg>
</div>
</body>
</html>
